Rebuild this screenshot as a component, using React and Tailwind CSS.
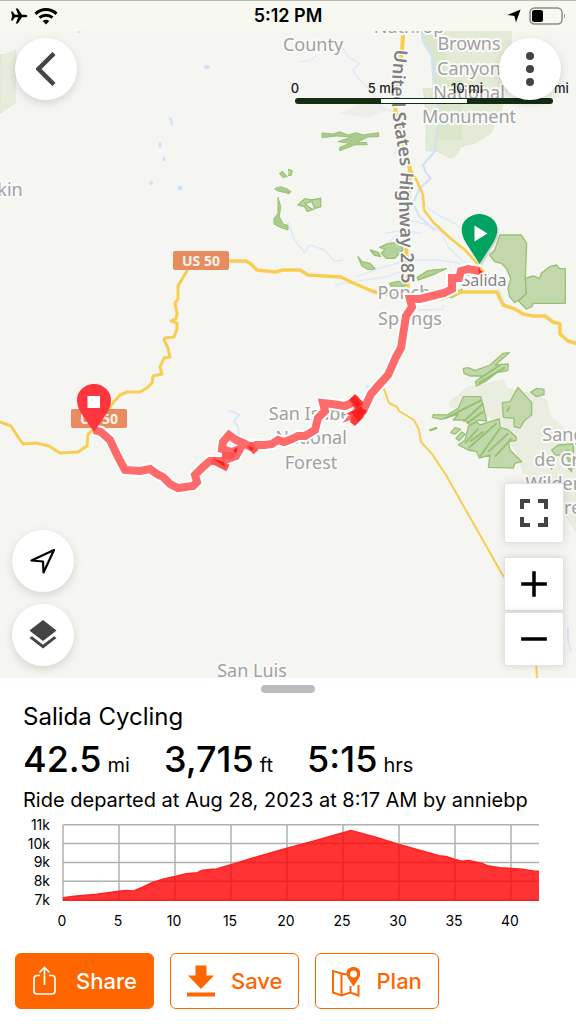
import React from 'react';
import { MdLayers, MdFullscreen } from 'react-icons/md';

const elevation = [
  [0, 7.12], [1, 7.2], [2, 7.25], [3, 7.3], [4, 7.38], [5, 7.47], [5.6, 7.5], [6.3, 7.48],
  [7, 7.65], [8, 7.93], [9, 8.12], [10, 8.25], [11, 8.4], [12, 8.45], [12.4, 8.57], [13, 8.62],
  [13.7, 8.65], [15, 8.88], [17.5, 9.33], [20, 9.75], [22.5, 10.15], [25, 10.58], [25.7, 10.7],
  [26.2, 10.62], [28, 10.32], [30, 9.95], [32, 9.62], [33.6, 9.36], [34.2, 9.32], [35, 9.15],
  [35.6, 9.06], [36.2, 9.1], [37.3, 8.97], [37.9, 8.82], [39, 8.72], [40, 8.68], [41, 8.63],
  [42, 8.54], [42.5, 8.53],
];

const labels = [
  { x: 409, y: 33, text: 'Nathrop' },
  { x: 313, y: 51, text: 'County' },
  { x: 469, y: 50, text: 'Browns' },
  { x: 469, y: 75, text: 'Canyon' },
  { x: 469, y: 99, text: 'National' },
  { x: 469, y: 123, text: 'Monument' },
  { x: 10, y: 196, text: 'kin' },
  { x: 409, y: 299, text: 'Poncha' },
  { x: 410, y: 325, text: 'Springs' },
  { x: 312, y: 420, text: 'San Isabel' },
  { x: 311, y: 444, text: 'National' },
  { x: 311, y: 469, text: 'Forest' },
  { x: 572, y: 441, text: 'Sangre' },
  { x: 572, y: 466, text: 'de Cristo' },
  { x: 572, y: 490, text: 'Wilderness' },
  { x: 572, y: 514, text: 'Area' },
  { x: 252, y: 677, text: 'San Luis' },
];

const routePath =
  'M94 430 L101 432 L110 440 L118 457 L125 470 L140 471 L150 469 L157 474 L163 477 L170 484 L178 488 L193 486 L197 482 L195 475 L203 467 L210 461 L222 461 L236 456 L240 449 L232 452 L222 449 L223 442 L229 435 L236 440 L243 443 L251 447 L256 445 L265 445 L272 444 L278 440 L284 442 L292 439 L298 436 L305 436 L315 430 L318 418 L325 411 L323 403 L332 404 L345 406 L356 401 L360 408 L355 414 L363 411 L371 394 L378 386 L388 375 L396 357 L401 348 L406 316 L412 307 L410 299 L420 299 L444 293 L452 289 L452 278 L459 278 L461 271 L468 269 L480 271';

const Glyph = ({ className, children, viewBox = '0 0 24 24' }) => (
  <svg viewBox={viewBox} className={className} fill="none" aria-hidden="true">
    {children}
  </svg>
);

const StatusBar = () => (
  <header className="absolute inset-x-0 top-0 z-20 grid h-[31px] grid-cols-3 items-center border-t border-[#b8b8b8] bg-[#f7f8f0] px-2.5 text-black">
    <div className="flex items-center gap-1.5">
      <Glyph viewBox="0 0 18 16" className="h-4 w-[18px]">
        <path d="M1 3.500h1.600L5 6.700h3.200L5.800.5h2l4.200 6.200h3.600c2.400.4 2.400 2.200 0 2.600H12L7.800 15.500h-2l2.400-6.200H5l-2.400 3.200H1L2.200 8Z" fill="currentColor" />
      </Glyph>
      <Glyph viewBox="0 0 24 17" className="h-[17px] w-6">
        <path d="M1.500 5.800C7.500.2 16.500.2 22.500 5.800M5.500 9.700c3.800-3.400 9.200-3.400 13 0" stroke="currentColor" strokeWidth="3" />
        <path d="M8.700 13c2-1.700 4.600-1.700 6.600 0L12 16.600Z" fill="currentColor" />
      </Glyph>
    </div>
    <p className="text-center text-lg leading-6 font-semibold">5:12 PM</p>
    <div className="flex items-center justify-end gap-2">
      <Glyph viewBox="0 0 14 14" className="h-[14px] w-[14px]">
        <path d="M13.600.4 9 13.400 7.400 7.100.4 6Z" fill="currentColor" />
      </Glyph>
      <Glyph viewBox="0 0 37 18" className="h-[18px] w-[37px]">
        <rect x="1" y="1" width="32" height="16" rx="4.500" stroke="#8b8c88" strokeWidth="1.500" />
        <rect x="3" y="3" width="11" height="12" rx="2.500" fill="currentColor" />
        <path d="M35 6.500c1.300.6 1.300 4.400 0 5" fill="#8b8c88" />
      </Glyph>
    </div>
  </header>
);

const Shield = ({ x, y }) => (
  <g>
    <rect x={x} y={y} width="56" height="19" rx="2" fill="#e88c60" />
    <text x={x + 28} y={y + 15} textAnchor="middle" className="fill-[#fdf3ec] text-sm font-bold">US 50</text>
  </g>
);

const Terrain = () => (
  <>
    {/* parks and forest */}
    <g transform="scale(.33333)">
      <path d="M0 165 20 162 48 150 45 310 0 340Z" fill="#e7ecdc" stroke="#cfdcbc" strokeWidth="3" strokeDasharray="3 4" />
    </g>
    <g transform="translate(288 0) scale(.33333)">
      <path d="M395 90H670V230L640 330 608 400 560 430 520 440 500 470 485 474 450 455 414 452V330L405 265H435L430 170 405 130Z" fill="#e3ebd6" stroke="#cddbbb" strokeWidth="3" strokeDasharray="3 4" />
      <path d="M398 90H475V240H522V420H444V300H425L436 250 430 170Z" fill="#dbe6cb" />
      <path d="M180 330 250 290 300 330 240 355 150 340Z" fill="#eeefec" />
      <path d="M102 399 135 402 155 395 180 405 205 398 225 405 272 398V410L240 411 205 428 235 427 238 434 200 435 155 452V442L185 430 150 425 190 411 145 408 102 413Z" fill="#aacb8d" stroke="#98c173" strokeWidth="3" />
      <path d="M0 508 12 512 10 525 0 527M0 570 8 575 0 582M30 615 50 596 70 600 98 595V620L80 625 72 605 50 610 60 620 75 628 58 634 50 620Z" fill="#b9d6a0" stroke="#98c173" strokeWidth="4" />
    </g>
    <g transform="scale(.33333)">
      <path d="M838 520 848 514 862 530 848 532ZM824 566 842 560 864 568V580L830 572ZM834 592 842 620 838 650 850 672 864 676V690L840 682 822 672V655L834 640Z" fill="#aacd8e" stroke="#98c173" strokeWidth="3" />
    </g>
    <g transform="translate(288 200) scale(.33333)" stroke="#98c173" strokeWidth="4" strokeLinejoin="round">
      <path d="M636 105H700L716 130 712 235 715 280 700 295 680 308 665 290 660 265 668 235 655 205 640 190 620 185 605 165 620 150Z" fill="#c2d8ac" />
      <path d="M712 235 735 228 755 235 760 220 785 200 805 195 815 206H832V310H735L732 320 715 327 692 303 715 280Z" fill="#c2d8ac" />
      <path d="M210 170 222 185 245 190 262 208 240 208 222 198ZM247 150 270 157 278 170 258 165ZM275 142 300 130 340 128 345 150 320 175 295 175 280 160 292 148ZM305 250 330 244 360 248 350 258 308 258ZM388 232 420 212 475 206 440 222 390 240Z" fill="#b5d19a" />
      <path d="M478 290 505 275 522 268 520 278 490 293Z" fill="#b5d19a" />
    </g>
    <g transform="translate(400 340) scale(.33333)" strokeLinejoin="round">
      <path d="M150 185 205 140 250 135 310 120 320 145 390 160 440 180 450 230 495 265 528 300V575L480 500 370 400 350 335 300 270 270 230 150 200Z" fill="#e9eee1" stroke="#d7e1c9" strokeWidth="3" strokeDasharray="3 4" />
      <g fill="#c2d8ac" stroke="#98c173" strokeWidth="4">
        <path d="M190 85 205 83 225 92 270 75 310 40 328 38 300 62 285 75 325 72 323 92 290 98 255 125 230 138 226 125 250 108 210 108 192 100Z" />
        <path d="M190 170H242L250 200 260 243 235 240 210 255 195 240 160 240 175 222 125 238 97 232 100 224 140 225 175 205Z" />
        <path d="M307 188 330 185 354 142 368 158 395 188V225L375 240 360 264 342 260V235L310 232Z" />
        <path d="M392 157 410 145 432 148V164L410 170Z" />
        <path d="M88 270 108 262 110 266 92 272ZM152 278 165 263 182 268 165 282ZM168 295 185 276 195 282 178 302Z" />
        <path d="M175 315 195 300 205 260 230 245 240 255 270 245 298 237 300 262 325 270 348 290V302L325 305 330 330 365 365 345 370 340 384 265 382 270 345 238 354 230 335 205 330Z" />
        <path d="M455 330 475 315 520 312V340L500 330 490 345 465 345ZM445 360 460 352 455 388ZM500 350 515 358 510 372ZM505 385 515 385V395Z" />
      </g>
      <path d="M135 235 245 180M190 245 250 190M200 250 250 215M235 130 315 82M240 115 300 75M195 310 235 265M205 325 290 250M240 350 300 265M265 335 325 280M285 350 335 295M210 305 250 275M320 215 330 200" stroke="#98c173" strokeWidth="6" fill="none" />
    </g>

    {/* water */}
    <g transform="translate(288 0) scale(.33333)" fill="none" stroke="#dfeafc" strokeWidth="4">
      <path d="M165 145 180 170 215 190 195 210 210 235 230 255 260 290 280 325 320 335M32 185 65 182 90 165M325 440 318 468" />
      <path d="M400 95 412 130 430 160 440 240 450 300 455 370 445 400 440 455 405 495 412 515 428 535 395 565 375 610 395 650 440 690" stroke="#cfe1fa" strokeWidth="6" />
      <path d="M395 585 420 625 460 650 490 665 530 690" />
    </g>
    <g transform="translate(288 200) scale(.33333)" fill="none" stroke="#dce8fb" strokeWidth="4">
      <path d="M0 65 20 120 50 158 65 135 110 150 140 185 165 180M350 10 365 60 420 75 460 95 480 140 520 180 560 205 600 225 630 260 650 310M140 255 200 245 300 230 345 212M205 230 290 200 365 180 450 180 520 190M385 330 465 328V315M350 85 300 130M290 100 345 90 400 100" />
      <ellipse cx="239" cy="560" rx="5" ry="4" fill="#cfe1fa" />
    </g>
    <g fill="#cfe1fb">
      <ellipse cx="79" cy="32" rx="2" ry="1" /><ellipse cx="207" cy="67" rx="3" ry="2" />
      <path d="M169 117 172 118 173 126 171 125Z" />
      <ellipse cx="160" cy="145" rx="1.500" ry="3" /><ellipse cx="164" cy="159" rx="1.500" ry="2.500" />
      <ellipse cx="151" cy="183" rx="2" ry="2" /><ellipse cx="180" cy="188" rx="2.500" ry="2.500" />
    </g>
    <path d="M228 411 234 412 239 415 234 421 238 427 239 434M568 627 568 640 571 652" fill="none" stroke="#dce8f8" strokeWidth="2" />

    {/* highways */}
    <g fill="none" stroke="#f7cd52" strokeLinejoin="round" strokeLinecap="round">
      <path strokeWidth="3.500" d="M229 261H246L251 264 257 270 275 272 283 270H300L308 275 341 277 353 283 372 291 382 294 394 295H410L440 299 460 292H497L503 305 515 309 523 314 533 316H545L553 322 560 324V334L568 341 578 344" />
      <path strokeWidth="3" d="M187 271 182 279 178 286V299L175 303 177 314 176 319 171 321 177 323V329L174 337 165 338 164 340 168 348 170 357 164 358 160 367 162 374 153 376 152 383 147 388 140 392H127L120 395 112 404 94 429 88 434 87 446 78 452 60 453 49 446 36 443 23 444 18 437 11 426 0 422" />
      <path strokeWidth="4" d="M403 36 402 50 395 108 410 169 406 240 408 293" />
      <path strokeWidth="2.500" d="M410 169 417 181 423 195 424 210 433 222 450 238 465 250 475 261 488 278" />
      <path strokeWidth="2" d="M384 389 389 403 397 407 399 411 414 420 419 430 421 442 432 454 446 475 502 574 520 600M536 660 537 680" />
    </g>
  </>
);

const MapView = () => (
  <svg
    viewBox="0 0 576 678"
    preserveAspectRatio="xMidYMid slice"
    className="absolute inset-0 h-full w-full font-['Noto_Sans',sans-serif]"
    role="img"
    aria-label="Route map"
  >
    <rect width="576" height="678" fill="#f5f6f1" />
    <Terrain />
    <Shield x={173} y={251} />
    <Shield x={71} y={409} />

    <g className="fill-[#a0a1a0] stroke-[#fafaf8] text-lg" strokeWidth="4" strokeLinejoin="round" textAnchor="middle" paintOrder="stroke">
      {labels.map((label) => (
        <text key={`${label.text}-${label.y}`} x={label.x} y={label.y}>{label.text}</text>
      ))}
      <text x="484" y="286" className="fill-[#858585] text-base">Salida</text>
    </g>
    <path id="us285" d="M395 49 C392 75 391 88 392 107 C394 130 399 150 401 172 C398 195 399 210 400 230 L402 300" fill="none" />
    <text className="fill-[#808080] stroke-[#fafaf8] text-lg font-semibold" strokeWidth="3" paintOrder="stroke">
      <textPath href="#us285">United States Highway 285</textPath>
    </text>

    {/* ridden route */}
    <g fill="none" strokeLinejoin="miter">
      <path d={routePath} stroke="#fff" strokeWidth="12" />
      <path d="M350 400 356 394 364 404 367 411 356 426 347 413Z" fill="#fff" stroke="#fff" strokeWidth="3" />
      <path d={routePath} stroke="#ff6b6b" strokeWidth="8" />
      <path d="M212 460 228 468M222 455 234 456M249 444 256 452" stroke="#ff5555" strokeWidth="7" />
      <path d="M349 400 355 394 363 402 362 410 367 410 363 418 355 426 350 422 352 415 346 414 355 409Z" fill="#ff3a3a" />
      <path d="M350 399 355 395 361 404 358 409ZM352 412 361 407 366 411 358 422ZM213 459 224 462 225 467ZM233 450 238 447 236 454ZM248 446 254 448 251 451Z" fill="#f92020" />
      <path d="m478 268 5 4-4 2" fill="#ff2b2b" />
    </g>

    {/* start and finish */}
    <path d="M486 220q15 7 8 20l-14 24" fill="none" stroke="#777" strokeOpacity=".25" strokeWidth="5" />
    <path d="M479.500 264 466 243C454 223 470 214 479.500 214S505 223 493 243Z" fill="#00a35f" />
    <path d="M474.500 225.500v16l13-8Z" fill="#fff" />
    <path d="M94 432 81 413C70 394 84 384 94 384S118 394 107 413Z" fill="#ff3640" />
    <rect x="87.500" y="396" width="12.500" height="12" fill="#fff" />
  </svg>
);

const ScaleBar = () => (
  <div className="absolute top-20 -right-5 left-[252px] text-[13px] leading-4 font-medium text-[#222]">
    <div className="grid grid-cols-4 text-center">
      <span>0</span>
      <span>5 mi</span>
      <span>10 mi</span>
      <span>15 mi</span>
    </div>
    <div className="mx-[12.5%] mt-0.5 flex h-1.5 overflow-hidden rounded-full bg-[#142d13]">
      <span className="flex-1" />
      <span className="flex-1 border-y border-[#142d13] bg-white" />
      <span className="flex-1" />
    </div>
  </div>
);

const roundButton =
  'flex h-[62px] w-[62px] items-center justify-center rounded-full bg-white text-[#444] shadow-[0_3px_10px_rgba(0,0,0,0.14)]';
const squareButton =
  'flex w-[60px] items-center justify-center rounded-xs border border-[#e2e2e0] bg-white shadow-[0_0_10px_rgba(0,0,0,0.13)]';

const MapControls = () => (
  <div className="absolute inset-0 flex flex-col justify-between pt-[38px] pb-3">
    <div className="flex justify-between px-[15px]">
      <button type="button" aria-label="Back" className={roundButton}>
        <Glyph viewBox="0 0 20 34" className="h-[34px] w-5">
          <path d="M18 1.500 2.500 17 18 32.500" stroke="currentColor" strokeWidth="4.500" />
        </Glyph>
      </button>
      <button type="button" aria-label="More options" className={roundButton}>
        <Glyph viewBox="0 0 8 34" className="h-[34px] w-2">
          <g fill="currentColor">
            <circle cx="4" cy="4" r="4" /><circle cx="4" cy="17" r="4" /><circle cx="4" cy="30" r="4" />
          </g>
        </Glyph>
      </button>
    </div>
    <div className="flex items-end justify-between px-3">
      <div className="flex flex-col gap-3">
        <button type="button" aria-label="My location" className={roundButton}>
          <Glyph viewBox="0 0 26 26" className="h-[26px] w-[26px]">
            <path d="M24 2 1.500 12.500 13 13.500 13.500 24.500Z" stroke="#000" strokeWidth="2.200" strokeLinejoin="round" />
          </Glyph>
        </button>
        <button type="button" aria-label="Map layers" className={roundButton}>
          <MdLayers className="h-9 w-9" />
        </button>
      </div>
      <div className="flex flex-col">
        <button type="button" aria-label="Full screen" className={`${squareButton} mb-3.5 h-[60px] text-[#444]`}>
          <MdFullscreen className="h-12 w-12" />
        </button>
        <button type="button" aria-label="Zoom in" className={`${squareButton} h-[54px]`}>
          <Glyph className="h-7 w-7"><path d="M1 12H23M12 1V23" stroke="#000" strokeWidth="3" /></Glyph>
        </button>
        <button type="button" aria-label="Zoom out" className={`${squareButton} mt-px h-[54px]`}>
          <Glyph className="h-7 w-7"><path d="M1 12H23" stroke="#000" strokeWidth="3" /></Glyph>
        </button>
      </div>
    </div>
  </div>
);

const ElevationChart = () => {
  const px = (mile) => 63 + mile * 11.2;
  const py = (k) => 86 - (k - 7) * 18.8;
  const line = elevation.map(([m, k]) => `${px(m)} ${py(k)}`).join(' L');

  return (
    <svg viewBox="0 0 576 124" className="w-full fill-black text-sm" role="img" aria-label="Elevation profile">
      <g stroke="#b0b0b0" strokeWidth="1.500">
        {[7, 8, 9, 10, 11].map((k) => <path key={k} d={`M63 ${py(k)}H539`} />)}
        {[0, 5, 10, 15, 20, 25, 30, 35, 40].map((m) => <path key={m} d={`M${px(m)} 11V87`} />)}
      </g>
      <path d={`M63 87 L${line} L539 87Z`} fill="#f00" fillOpacity=".8" />
      <path d={`M${line}`} fill="none" stroke="#f22" strokeWidth="1.500" />
      {[7, 8, 9, 10, 11].map((k) => (
        <text key={k} x="50" y={py(k) + 5} textAnchor="end">{k}k</text>
      ))}
      {[0, 5, 10, 15, 20, 25, 30, 35, 40].map((m) => (
        <text key={m} x={px(m) - 1} y="112" textAnchor="middle">{m}</text>
      ))}
    </svg>
  );
};

const stats = [
  { value: '42.5', unit: 'mi' },
  { value: '3,715', unit: 'ft' },
  { value: '5:15', unit: 'hrs' },
];

const actionButton = 'flex h-14 items-center rounded-md border border-[#ff6600] text-[22px] font-medium';

const RidePanel = () => (
  <section className="bg-white pt-[7px] pb-[15px]">
    <div className="mx-auto h-2 w-[54px] rounded-full bg-[#bdbdbd]" />
    <div className="mt-2 px-[23px]">
      <h1 className="text-2xl leading-8">Salida Cycling</h1>
      <div className="mt-1 flex gap-[34px]">
        {stats.map((stat) => (
          <p key={stat.unit} className="flex items-baseline gap-1.5">
            <span className="text-4xl leading-11 font-medium">{stat.value}</span>
            <span className="text-xl leading-6">{stat.unit}</span>
          </p>
        ))}
      </div>
      <p className="mt-[5px] text-[20px] leading-7">Ride departed at Aug 28, 2023 at 8:17 AM by anniebp</p>
    </div>
    <ElevationChart />
    <div className="mt-[15px] flex gap-4 px-[15px]">
      <button type="button" className={`${actionButton} gap-[18px] bg-[#ff6600] px-4 text-white`}>
        <Glyph viewBox="0 0 26 30" className="h-[30px] w-[26px]">
          <path d="M8 9.500H5A3 3 0 0 0 2 12.500V25a3 3 0 0 0 3 3H20a3 3 0 0 0 3-3V12.500a3 3 0 0 0-3-3H17M12.500 19V1.500M7.500 6.500 12.500 1.500 17.500 6.500" stroke="currentColor" strokeWidth="1.700" />
        </Glyph>
        Share
      </button>
      <button type="button" className={`${actionButton} gap-4 bg-white px-4 text-[#ff6600]`}>
        <Glyph viewBox="0 0 28 32" className="h-8 w-7">
          <path d="M8.500 0.500h11v10h7.500L14 24 1 10.500h7.500ZM0 27.500h28v4H0Z" fill="currentColor" />
        </Glyph>
        Save
      </button>
      <button type="button" className={`${actionButton} gap-4 bg-white px-4 text-[#ff6600]`}>
        <Glyph viewBox="0 0 28 31" className="h-[31px] w-7">
          <path d="M15 8.500 9.500 7.500 1 5V26.500L9.500 29.500 18.500 26.500 26.500 29.500V19M9.500 7.500V29.500M18.500 20v6.500" stroke="currentColor" strokeWidth="2" />
          <path fillRule="evenodd" d="M21.500 20.500 16 12C12 5 17 1 21.500 1S31 5 27 12ZM21.500 4.500a3.500 3.500 0 1 0 0 7 3.500 3.500 0 0 0 0-7Z" fill="currentColor" />
        </Glyph>
        Plan
      </button>
    </div>
  </section>
);

const App = () => (
  <main className="flex min-h-screen flex-col bg-white font-[Inter,sans-serif] text-black">
    <div className="relative flex-1 overflow-hidden">
      <StatusBar />
      <MapView />
      <ScaleBar />
      <MapControls />
    </div>
    <RidePanel />
  </main>
);

export default App;
